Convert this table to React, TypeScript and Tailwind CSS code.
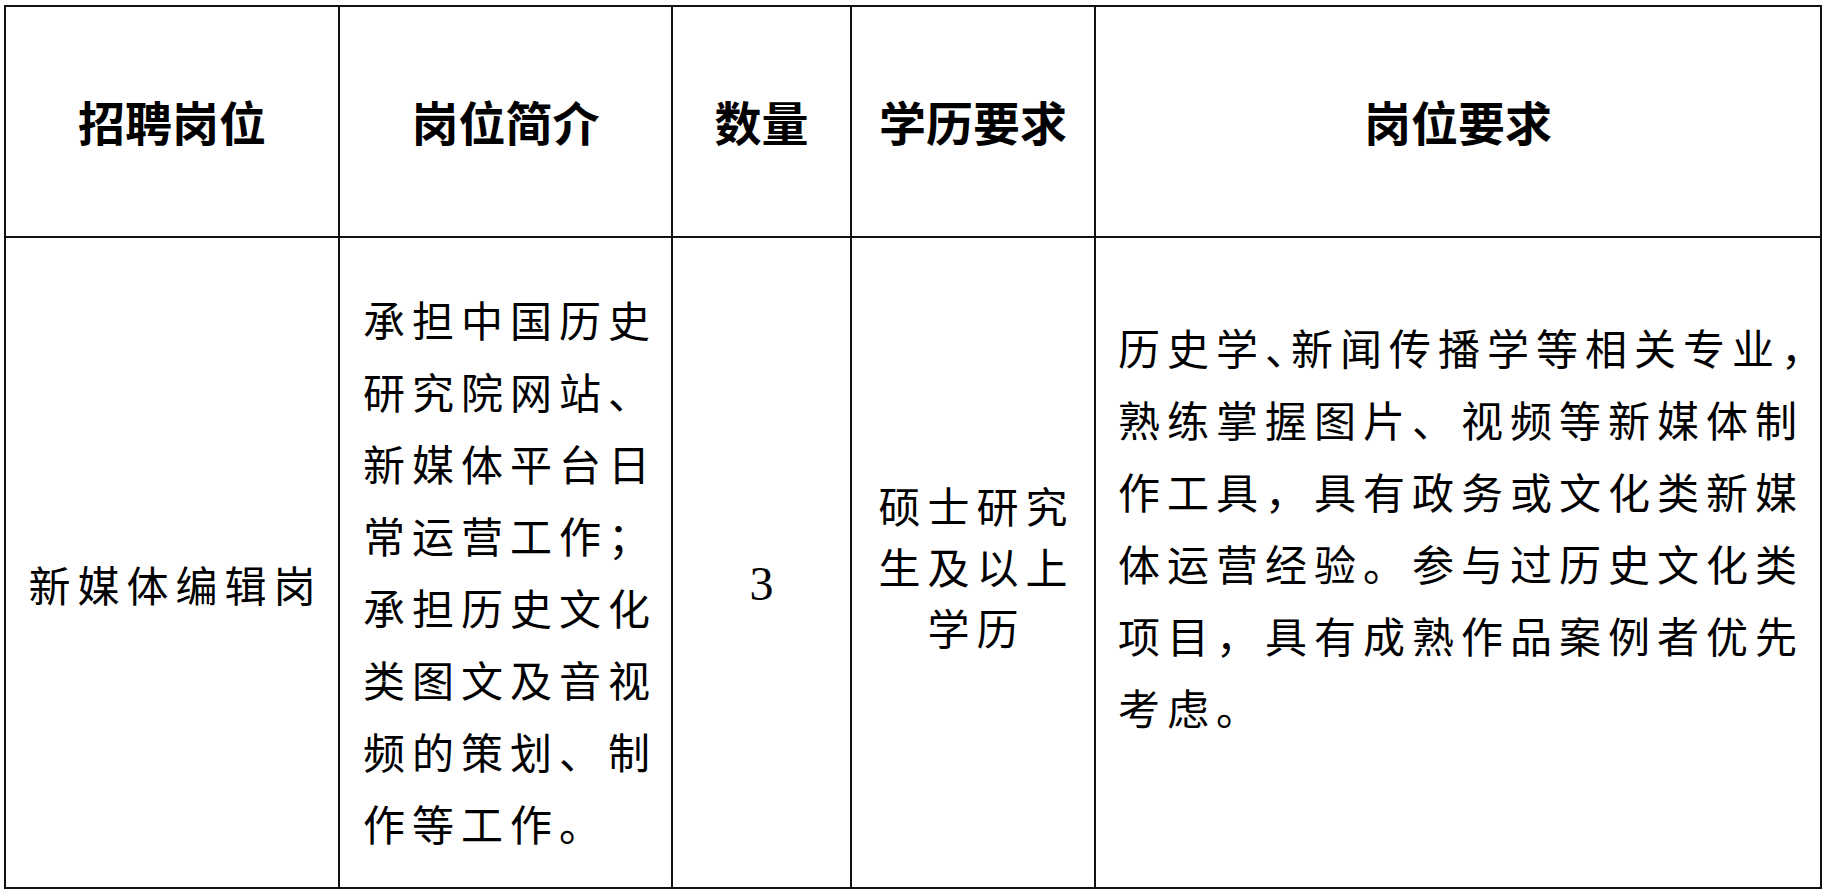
const cjk = "font-['Noto_Sans_CJK_SC','Noto_Sans_CJK_JP',sans-serif]";

const introLines = [
  '承担中国历史',
  '研究院网站、',
  '新媒体平台日',
  '常运营工作；',
  '承担历史文化',
  '类图文及音视',
  '频的策划、制',
  '作等工作。',
];

const degreeLines = ['硕士研究', '生及以上', '学历'];

const Header = ({ children }: { children: React.ReactNode }) => (
  <div className={`flex items-center justify-center bg-white text-[47px] font-bold text-black ${cjk}`}>
    {children}
  </div>
);

export default function App() {
  return (
    <div className="min-h-screen bg-white pl-[4px] pt-[5px]">
      <div className="grid w-[1818px] h-[884px] grid-cols-[332px_331px_177px_242px_724px] grid-rows-[229px_649px] gap-[2px] bg-[#111] p-[2px]">
        {/* header row */}
        <Header>招聘岗位</Header>
        <Header>岗位简介</Header>
        <Header>数量</Header>
        <Header>学历要求</Header>
        <Header>岗位要求</Header>

        {/* body row */}
        <div className={`flex items-center justify-center bg-white pt-[42px] pl-[7px] text-[42px] tracking-[7px] text-black ${cjk}`}>
          新媒体编辑岗
        </div>

        <div className={`flex flex-col justify-center bg-white pt-[17px] pl-[23px] text-[42px] leading-[72px] tracking-[7px] text-black ${cjk}`}>
          {introLines.map((l) => (
            <div key={l} className="whitespace-nowrap">{l}</div>
          ))}
        </div>

        <div className="flex items-center justify-center bg-white pt-[42px] font-['Liberation_Serif',serif] text-[48px] text-black">
          3
        </div>

        <div className={`flex flex-col items-center justify-center bg-white pt-[6px] pl-[7px] text-[42px] leading-[61px] tracking-[7px] text-black ${cjk}`}>
          {degreeLines.map((l) => (
            <div key={l} className="whitespace-nowrap">{l}</div>
          ))}
        </div>

        <div className={`flex flex-col justify-center bg-white pb-[72px] pl-[22px] text-[42px] leading-[72px] tracking-[7px] text-black ${cjk}`}>
          <div className="whitespace-nowrap">
            历史学<span className="tracking-[-16px]">、</span>新闻传播学等相关专业<span className="tracking-[-20px]">，</span>
          </div>
          <div className="whitespace-nowrap">熟练掌握图片、视频等新媒体制</div>
          <div className="whitespace-nowrap">作工具，具有政务或文化类新媒</div>
          <div className="whitespace-nowrap">体运营经验。参与过历史文化类</div>
          <div className="whitespace-nowrap">项目，具有成熟作品案例者优先</div>
          <div className="whitespace-nowrap">考虑。</div>
        </div>
      </div>
    </div>
  );
}
